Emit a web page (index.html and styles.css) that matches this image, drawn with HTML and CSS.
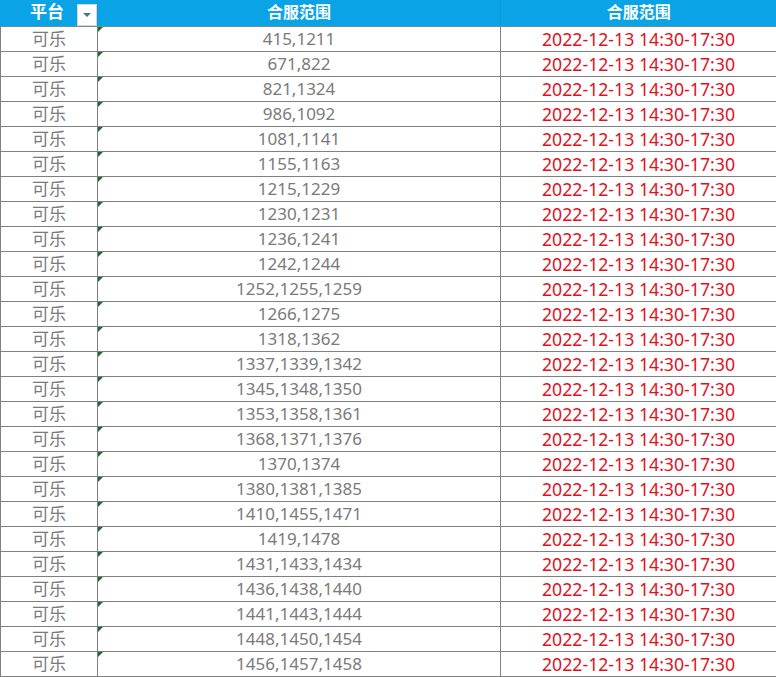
FILE: index.html
```html
<!DOCTYPE html>
<html lang="zh">
<head>
<meta charset="utf-8">
<link rel="stylesheet" href="styles.css">
</head>
<body>
<table class="sheet">
  <colgroup><col class="c1"><col class="c2"><col class="c3"></colgroup>
  <thead>
    <tr>
      <th class="h1">平台<span class="filter"><span class="tri"></span></span></th>
      <th>合服范围</th>
      <th>合服范围</th>
    </tr>
  </thead>
  <tbody>
    <tr><td>可乐</td><td class="num">415,1211</td><td class="time">2022-12-13 14:30-17:30</td></tr>
    <tr><td>可乐</td><td class="num">671,822</td><td class="time">2022-12-13 14:30-17:30</td></tr>
    <tr><td>可乐</td><td class="num">821,1324</td><td class="time">2022-12-13 14:30-17:30</td></tr>
    <tr><td>可乐</td><td class="num">986,1092</td><td class="time">2022-12-13 14:30-17:30</td></tr>
    <tr><td>可乐</td><td class="num">1081,1141</td><td class="time">2022-12-13 14:30-17:30</td></tr>
    <tr><td>可乐</td><td class="num">1155,1163</td><td class="time">2022-12-13 14:30-17:30</td></tr>
    <tr><td>可乐</td><td class="num">1215,1229</td><td class="time">2022-12-13 14:30-17:30</td></tr>
    <tr><td>可乐</td><td class="num">1230,1231</td><td class="time">2022-12-13 14:30-17:30</td></tr>
    <tr><td>可乐</td><td class="num">1236,1241</td><td class="time">2022-12-13 14:30-17:30</td></tr>
    <tr><td>可乐</td><td class="num">1242,1244</td><td class="time">2022-12-13 14:30-17:30</td></tr>
    <tr><td>可乐</td><td class="num">1252,1255,1259</td><td class="time">2022-12-13 14:30-17:30</td></tr>
    <tr><td>可乐</td><td class="num">1266,1275</td><td class="time">2022-12-13 14:30-17:30</td></tr>
    <tr><td>可乐</td><td class="num">1318,1362</td><td class="time">2022-12-13 14:30-17:30</td></tr>
    <tr><td>可乐</td><td class="num">1337,1339,1342</td><td class="time">2022-12-13 14:30-17:30</td></tr>
    <tr><td>可乐</td><td class="num">1345,1348,1350</td><td class="time">2022-12-13 14:30-17:30</td></tr>
    <tr><td>可乐</td><td class="num">1353,1358,1361</td><td class="time">2022-12-13 14:30-17:30</td></tr>
    <tr><td>可乐</td><td class="num">1368,1371,1376</td><td class="time">2022-12-13 14:30-17:30</td></tr>
    <tr><td>可乐</td><td class="num">1370,1374</td><td class="time">2022-12-13 14:30-17:30</td></tr>
    <tr><td>可乐</td><td class="num">1380,1381,1385</td><td class="time">2022-12-13 14:30-17:30</td></tr>
    <tr><td>可乐</td><td class="num">1410,1455,1471</td><td class="time">2022-12-13 14:30-17:30</td></tr>
    <tr><td>可乐</td><td class="num">1419,1478</td><td class="time">2022-12-13 14:30-17:30</td></tr>
    <tr><td>可乐</td><td class="num">1431,1433,1434</td><td class="time">2022-12-13 14:30-17:30</td></tr>
    <tr><td>可乐</td><td class="num">1436,1438,1440</td><td class="time">2022-12-13 14:30-17:30</td></tr>
    <tr><td>可乐</td><td class="num">1441,1443,1444</td><td class="time">2022-12-13 14:30-17:30</td></tr>
    <tr><td>可乐</td><td class="num">1448,1450,1454</td><td class="time">2022-12-13 14:30-17:30</td></tr>
    <tr><td>可乐</td><td class="num">1456,1457,1458</td><td class="time">2022-12-13 14:30-17:30</td></tr>
  </tbody>
</table>
</body>
</html>
```

FILE: styles.css
```css
html, body {
  margin: 0;
  padding: 0;
  background: #ffffff;
}

.sheet {
  border-collapse: collapse;
  table-layout: fixed;
  width: 776px;
  font-family: "Noto Sans", "Noto Sans CJK SC", sans-serif;
  font-size: 17px;
}

.c1 { width: 97px; }
.c2 { width: 403px; }
.c3 { width: 276px; }

.sheet th {
  height: 26px;
  padding: 0;
  background: #0aa4e6;
  color: #ffffff;
  font-weight: bold;
  font-size: 16px;
  line-height: 24px;
  text-align: center;
  vertical-align: top;
  border-left: 1px solid #1794d2;
  border-bottom: 1px solid #7f8a90;
}

.sheet th:first-child {
  border-left: 1px solid #0aa4e6;
}

.sheet th.h1 {
  position: relative;
  padding-right: 4px;
  font-size: 17px;
}

.filter {
  position: absolute;
  right: 0;
  top: 4px;
  width: 20px;
  height: 22px;
  box-sizing: border-box;
  background: #ffffff;
  border: 1px solid #cfd8dc;
  display: flex;
  align-items: center;
  justify-content: center;
}

.tri {
  width: 0;
  height: 0;
  border-left: 4px solid transparent;
  border-right: 4px solid transparent;
  border-top: 4px solid #3d7f78;
}

.sheet td {
  height: 24px;
  padding: 0;
  line-height: 24px;
  text-align: center;
  color: #7a7a7a;
  border: 1px solid #808080;
  white-space: nowrap;
}

.sheet td:last-child {
  border-right-color: #c4c4c4;
}

.sheet td.num {
  position: relative;
}

.sheet td.num::before {
  content: "";
  position: absolute;
  left: 0;
  top: 0;
  width: 0;
  height: 0;
  border-top: 5px solid #1b6e2a;
  border-right: 5px solid transparent;
}

.sheet td.time {
  color: #e2101c;
  font-size: 17.7px;
}
```
